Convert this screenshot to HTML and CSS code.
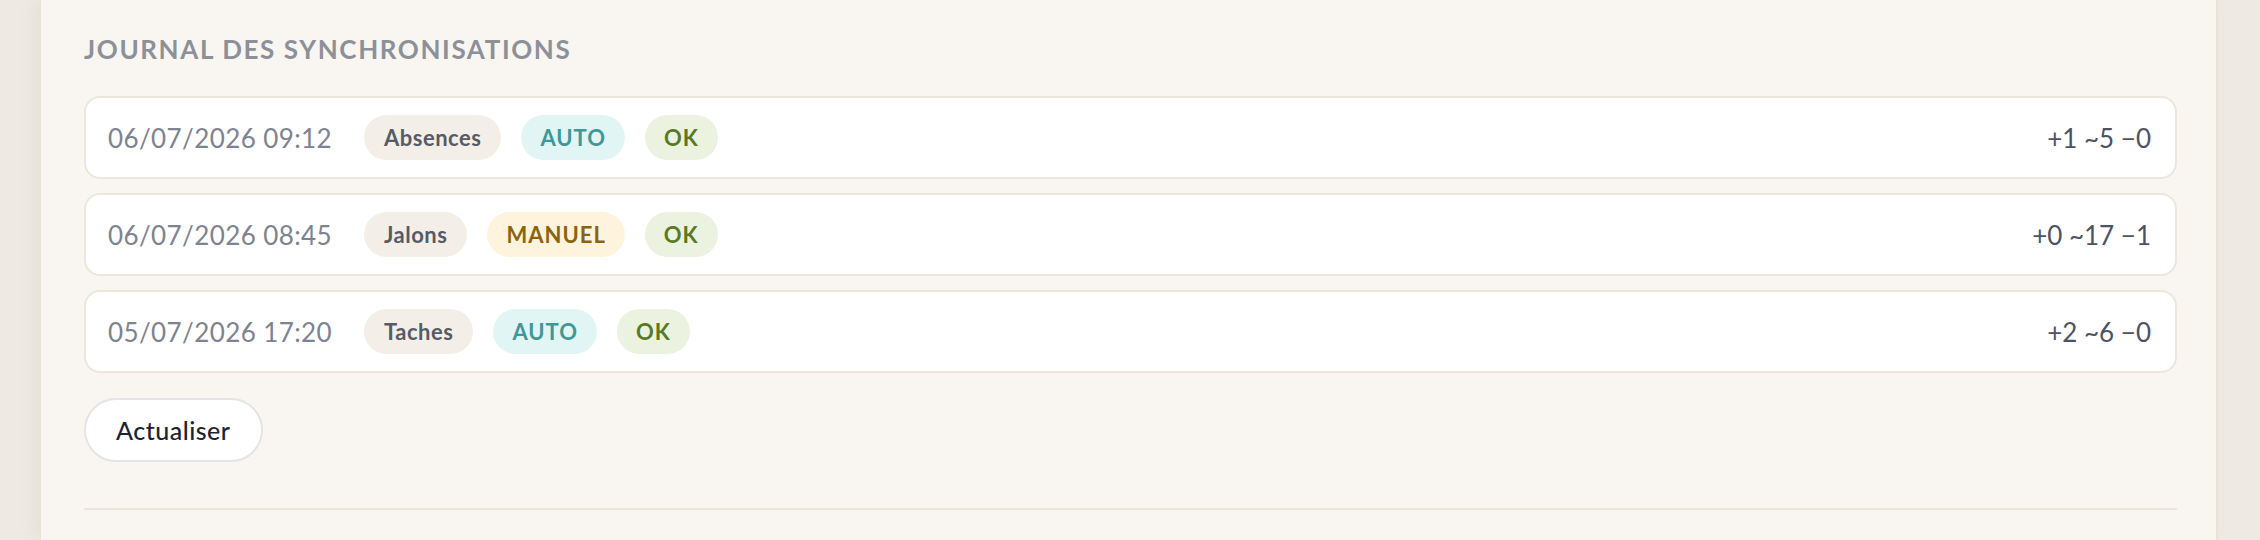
FILE: index.html
```html
<!DOCTYPE html>
<html lang="fr">
<head>
<meta charset="utf-8">
<title>Journal des synchronisations</title>
<link rel="stylesheet" href="styles.css">
</head>
<body>
<div class="page">
  <section class="panel">
    <h2 class="section-title">Journal des synchronisations</h2>

    <ul class="sync-log">
      <li class="sync-row">
        <span class="sync-date">06/07/2026 09:12</span>
        <span class="chip chip-scope">Absences</span>
        <span class="chip chip-auto">AUTO</span>
        <span class="chip chip-ok">OK</span>
        <span class="sync-counts">+1 ~5 −0</span>
      </li>
      <li class="sync-row">
        <span class="sync-date">06/07/2026 08:45</span>
        <span class="chip chip-scope">Jalons</span>
        <span class="chip chip-manual">MANUEL</span>
        <span class="chip chip-ok">OK</span>
        <span class="sync-counts">+0 ~17 −1</span>
      </li>
      <li class="sync-row">
        <span class="sync-date">05/07/2026 17:20</span>
        <span class="chip chip-scope">Taches</span>
        <span class="chip chip-auto">AUTO</span>
        <span class="chip chip-ok">OK</span>
        <span class="sync-counts">+2 ~6 −0</span>
      </li>
    </ul>

    <button class="btn-refresh" type="button">Actualiser</button>

    <hr class="panel-divider">
  </section>
</div>
</body>
</html>
```

FILE: styles.css
```css
* {
  box-sizing: border-box;
}

html,
body {
  margin: 0;
  padding: 0;
  height: 100%;
}

body {
  background: #eeeae3;
  font-family: "Lato", "Noto Sans", sans-serif;
  overflow: hidden;
}

.page {
  display: flex;
  height: 100%;
  padding: 0 42px 0 40px;
}

.panel {
  flex: 1;
  background: #f9f6f1;
  border-left: 1px solid #e9e2d6;
  border-right: 2px solid #e9e2d6;
  box-shadow: -6px 0 14px rgba(140, 120, 90, 0.08);
  padding: 33px 39px 0 43px;
  display: flex;
  flex-direction: column;
}

.section-title {
  margin: 0;
  font-size: 26px;
  line-height: 32px;
  font-weight: 700;
  letter-spacing: 1.6px;
  text-transform: uppercase;
  color: #8c9098;
}

.sync-log {
  list-style: none;
  margin: 31px 0 0;
  padding: 0;
  display: flex;
  flex-direction: column;
  gap: 14px;
}

.sync-row {
  display: flex;
  align-items: center;
  gap: 20px;
  height: 83px;
  padding: 0 24px 0 22px;
  background: #ffffff;
  border: 2px solid #ece6dc;
  border-radius: 16px;
}

.sync-date {
  width: 236px;
  font-size: 26px;
  letter-spacing: 0.4px;
  color: #7d8391;
  white-space: nowrap;
}

.chip {
  display: inline-flex;
  align-items: center;
  height: 45px;
  padding: 0 19px;
  border-radius: 999px;
  font-size: 22px;
  font-weight: 700;
  white-space: nowrap;
}

.chip-scope {
  padding: 0 20px;
  letter-spacing: 0.5px;
  background: #f3efe8;
  color: #565b67;
}

.chip-auto,
.chip-manual,
.chip-ok {
  letter-spacing: 1px;
}

.chip-auto {
  background: #e1f5f4;
  color: #3e9897;
}

.chip-manual {
  background: #fef3dc;
  color: #8a6410;
}

.chip-ok {
  background: #ebf2e0;
  color: #577a22;
}

.sync-counts {
  margin-left: auto;
  font-size: 26px;
  color: #4b5364;
  white-space: nowrap;
}

.btn-refresh {
  align-self: flex-start;
  margin-top: 25px;
  height: 64px;
  padding: 0 30px;
  background: #ffffff;
  border: 2px solid #e3e4e7;
  border-radius: 999px;
  font-family: inherit;
  font-size: 25px;
  font-weight: 500;
  letter-spacing: 0.5px;
  color: #1b2435;
}

.panel-divider {
  margin: 46px 0 0;
  height: 2px;
  border: 0;
  background: #ebe5dc;
}
```
